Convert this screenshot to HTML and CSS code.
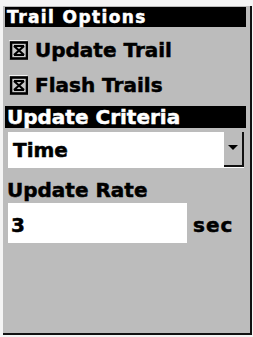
FILE: index.html
```html
<!DOCTYPE html>
<html lang="en">
<head>
    <meta charset="UTF-8">
    <title>Trail Options</title>
    <link rel="stylesheet" href="styles.css">
</head>
<body>

    <div class="screen">
        <div class="title-bar">Trail Options</div>

        <div class="check-row">
            <svg class="check" width="19" height="20" viewBox="0 0 19 20">
                <path d="M0.5 19.5 L0.5 0.5 L18.5 0.5" fill="none" stroke="#f2f2f2" stroke-width="1"/>
                <rect x="2" y="2.5" width="16" height="16" fill="#c8c8c8" stroke="#000" stroke-width="2.6"/>
                <path d="M5 6 L15 15 M15 6 L5 15 M5 6 L15 6 M5 15 L15 15" stroke="#000" stroke-width="2.2" fill="none"/>
            </svg>
            <span>Update Trail</span>
        </div>

        <div class="check-row second">
            <svg class="check" width="19" height="20" viewBox="0 0 19 20">
                <path d="M0.5 19.5 L0.5 0.5 L18.5 0.5" fill="none" stroke="#f2f2f2" stroke-width="1"/>
                <rect x="2" y="2.5" width="16" height="16" fill="#c8c8c8" stroke="#000" stroke-width="2.6"/>
                <path d="M5 6 L15 15 M15 6 L5 15 M5 6 L15 6 M5 15 L15 15" stroke="#000" stroke-width="2.2" fill="none"/>
            </svg>
            <span>Flash Trails</span>
        </div>

        <div class="section-bar">Update Criteria</div>

        <div class="dropdown">
            <span class="dropdown-value">Time</span>
            <div class="dropdown-button">
                <div class="arrow"></div>
            </div>
        </div>

        <div class="label">Update Rate</div>

        <div class="rate-row">
            <div class="rate-box">3</div>
            <span class="unit">sec</span>
        </div>
    </div>

</body>
</html>
```

FILE: styles.css
```css
body {
    margin: 0;
    background-color: #f4f4f4;
    font-family: "DejaVu Sans", Verdana, sans-serif;
    font-weight: bold;
    color: #000;
    -webkit-text-stroke: 0.5px;
}

.screen {
    box-sizing: border-box;
    width: 249px;
    height: 329px;
    margin: 6px 0 0 3px;
    padding: 1px 4px 0 2px;
    background-color: #bcbcbc;
    border-right: 2px solid #111;
    border-bottom: 2px solid #111;
}

.title-bar {
    height: 20px;
    line-height: 20px;
    padding-left: 2px;
    background-color: #000;
    color: #fff;
    font-size: 17px;
    letter-spacing: 1.4px;
}

.check-row {
    display: flex;
    align-items: center;
    height: 26px;
    margin-top: 10px;
    padding-left: 4px;
    font-size: 20px;
    line-height: 26px;
}

.check-row.second {
    margin-top: 9px;
}

.check {
    display: block;
    flex-shrink: 0;
    margin-right: 7px;
}

.section-bar {
    height: 22px;
    line-height: 22px;
    margin-top: 8px;
    padding-left: 2px;
    background-color: #000;
    color: #fff;
    font-size: 20px;
}

.dropdown {
    display: flex;
    justify-content: space-between;
    height: 36px;
    margin: 4px 2px 0 3px;
    background-color: #fff;
}

.dropdown-value {
    padding-left: 5px;
    font-size: 20px;
    line-height: 36px;
}

.dropdown-button {
    box-sizing: border-box;
    display: flex;
    justify-content: center;
    align-items: center;
    width: 20px;
    height: 35px;
    background-color: #bcbcbc;
    border-right: 2px solid #111;
    border-bottom: 2px solid #111;
}

.arrow {
    width: 0;
    height: 0;
    margin-bottom: 2px;
    border-left: 5px solid transparent;
    border-right: 5px solid transparent;
    border-top: 5px solid #000;
}

.label {
    height: 26px;
    line-height: 26px;
    margin-top: 9px;
    padding-left: 2px;
    font-size: 20px;
}

.rate-row {
    display: flex;
    align-items: baseline;
}

.rate-box {
    box-sizing: border-box;
    width: 179px;
    height: 40px;
    margin-left: 3px;
    padding: 10px 0 0 3px;
    background-color: #fff;
    font-size: 20px;
    line-height: 24px;
}

.unit {
    margin-left: 6px;
    font-size: 20px;
    letter-spacing: 1px;
}
```
